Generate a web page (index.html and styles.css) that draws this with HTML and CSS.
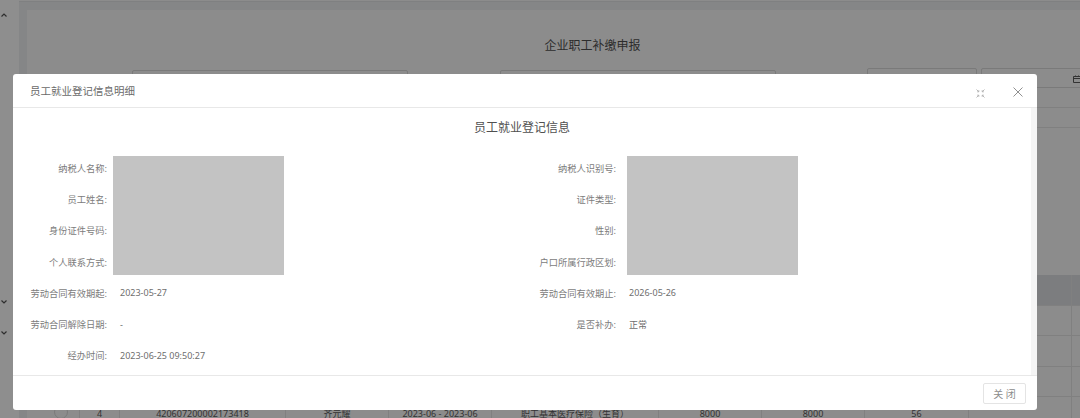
FILE: index.html
```html
<!DOCTYPE html>
<html lang="zh-CN">
<head>
<meta charset="utf-8">
<title>员工就业登记信息明细</title>
<link rel="stylesheet" href="styles.css">
</head>
<body>
<div class="page">
  <div class="side">
    <svg class="chev chev-up" width="6" height="4" viewBox="0 0 6 4"><path d="M0.500 3.500L3 1L5.500 3.500" fill="none" stroke="#2e2e2e" stroke-width="1.200"/></svg>
    <svg class="chev chev-d1" width="6" height="4" viewBox="0 0 6 4"><path d="M0.500 0.500L3 3L5.500 0.500" fill="none" stroke="#2e2e2e" stroke-width="1.200"/></svg>
    <svg class="chev chev-d2" width="6" height="4" viewBox="0 0 6 4"><path d="M0.500 0.500L3 3L5.500 0.500" fill="none" stroke="#2e2e2e" stroke-width="1.200"/></svg>
  </div>
  <div class="content">
    <div class="topbar"></div>
    <div class="card">
      <h1 class="page-title">企业职工补缴申报</h1>
      <div class="filters">
        <div class="fbox fbox-a"></div>
        <div class="fbox fbox-b"></div>
        <div class="fbox fbox-c"></div>
        <div class="fbox fbox-d">
          <svg class="cal" width="8" height="8" viewBox="0 0 8 8"><path d="M0.500 1.500H7.500V7.500H0.500ZM0.500 3.500H7.500M2.500 0.500V1.500M5.500 0.500V1.500" fill="none" stroke="#333" stroke-width="1"/></svg>
        </div>
      </div>
      <div class="fline"></div>
      <div class="fline"></div>
      <div class="grid">
        <div class="row row-head">
          <span></span><span></span><span></span><span></span><span></span><span></span><span></span><span></span><span></span><span></span><span class="amt">补缴金额</span><span></span>
        </div>
        <div class="row"><span></span><span></span><span></span><span></span><span></span><span></span><span></span><span></span><span></span><span></span><span></span><span></span></div>
        <div class="row"><span></span><span></span><span></span><span></span><span></span><span></span><span></span><span></span><span></span><span></span><span></span><span></span></div>
        <div class="row"><span></span><span></span><span></span><span></span><span></span><span></span><span></span><span></span><span></span><span></span><span></span><span></span></div>
        <div class="row">
          <span></span><span><i class="radio"></i></span><span>4</span><span>420607200002173418</span><span>齐元耀</span><span>2023-06 - 2023-06</span><span>职工基本医疗保险（生育）</span><span>8000</span><span>8000</span><span>56</span><span></span><span></span>
        </div>
      </div>
    </div>
  </div>
</div>
<div class="modal">
  <header class="modal-head">
    <span class="modal-title">员工就业登记信息明细</span>
    <svg class="ico-expand" width="9" height="9" viewBox="0 0 9 9"><path d="M0.500 0.500L2.500 2.500M2.800 1.200V2.800H1.200M8.500 0.500L6.500 2.500M6.200 1.200V2.800H7.800M0.500 8.500L2.500 6.500M2.800 7.800V6.200H1.200M8.500 8.500L6.500 6.500M6.200 7.800V6.200H7.800" fill="none" stroke="#a6a6a6" stroke-width="0.800"/></svg>
    <svg class="ico-close" width="10" height="10" viewBox="0 0 10 10"><path d="M0.500 0.500L9.500 9.500M9.500 0.500L0.500 9.500" fill="none" stroke="#909090" stroke-width="1"/></svg>
  </header>
  <div class="modal-body">
    <div class="scroll-area">
      <h2 class="sec-title">员工就业登记信息</h2>
      <div class="form">
        <div class="cell"><label>纳税人名称:</label><span></span></div>
        <div class="cell"><label>纳税人识别号:</label><span></span></div>
        <div class="cell"><label>员工姓名:</label><span></span></div>
        <div class="cell"><label>证件类型:</label><span></span></div>
        <div class="cell"><label>身份证件号码:</label><span></span></div>
        <div class="cell"><label>性别:</label><span></span></div>
        <div class="cell"><label>个人联系方式:</label><span></span></div>
        <div class="cell"><label>户口所属行政区划:</label><span></span></div>
        <div class="cell"><label>劳动合同有效期起:</label><span>2023-05-27</span></div>
        <div class="cell"><label>劳动合同有效期止:</label><span>2026-05-26</span></div>
        <div class="cell"><label>劳动合同解除日期:</label><span>-</span></div>
        <div class="cell"><label>是否补办:</label><span>正常</span></div>
        <div class="cell"><label>经办时间:</label><span>2023-06-25 09:50:27</span></div>
      </div>
      <div class="redact redact-l"></div>
      <div class="redact redact-r"></div>
    </div>
    <div class="scrollbar"></div>
  </div>
  <footer class="modal-foot"><button class="btn" type="button">关 闭</button></footer>
</div>
</body>
</html>
```
FILE: styles.css
```css
* { box-sizing: border-box; }
html, body { margin: 0; height: 100%; overflow: hidden; }
body {
  font-family: "Noto Sans", "Noto Sans CJK SC", sans-serif;
  background: #8c8c8c;
  width: 1080px;
  height: 418px;
  position: relative;
  color: #555;
}
.page { display: flex; height: 418px; }
.side { width: 19px; background: #8e8e8e; position: relative; flex: none; }
.chev { position: absolute; left: 1px; }
.chev-up { top: 13px; }
.chev-d1 { top: 300px; }
.chev-d2 { top: 331px; }
.content { flex: 1; min-width: 0; background: #858687; display: flex; flex-direction: column; }
.topbar { height: 2px; background: #8c8c8c; border-bottom: 1px solid #7f8081; flex: none; }
.card { margin: 8px 0 0 8px; flex: 1; min-height: 0; background: #8c8c8c; display: flex; flex-direction: column; overflow: hidden; }
.page-title { margin: 27px 0 0; padding-left: 78px; font-size: 12px; line-height: 18px; font-weight: 400; color: #2c2c2c; text-align: center; flex: none; }
.filters { display: flex; align-items: flex-start; height: 33px; border-bottom: 1px solid #808080; flex: none; }
.fbox { border: 1px solid #7a7a7a; border-radius: 2px; flex: none; }
.fbox-a { margin: 15px 0 0 105px; width: 276px; height: 30px; }
.fbox-b { margin: 15px 0 0 92px; width: 276px; height: 30px; }
.fbox-c { margin: 13px 0 0 91px; width: 110px; height: 20px; }
.fbox-d { margin: 13px 0 0 4px; width: 120px; height: 20px; padding: 6px 0 0 91px; }
.cal { display: block; }
.fline { height: 20px; border-bottom: 1px solid #808080; flex: none; }
.grid { margin-top: 147px; flex: none; font-size: 9px; line-height: 12px; color: #333; }
.row {
  display: grid;
  grid-template-columns: 14px 39px 40px 166px 103px 103px 167px 103px 103px 104px 103px 8px;
  height: 30.500px;
  border-bottom: 1px solid #808080;
}
.row span { border-right: 1px solid #808080; text-align: center; white-space: nowrap; padding-top: 11px; position: relative; }
.row span:first-child, .row span:last-child { border-right: 0; }
.row-head { background: #7c7d7f; }
.row span.amt { padding-right: 36px; padding-top: 9px; }
.radio { position: absolute; left: 13px; top: 8px; width: 14px; height: 14px; border: 1px solid #7a7a7a; border-radius: 50%; }

.modal {
  position: absolute; left: 13px; top: 74px; width: 1024px; height: 336px;
  background: #fff; border-radius: 3px; display: flex; flex-direction: column;
}
.modal-head { height: 34px; border-bottom: 1px solid #e8e8e8; display: flex; align-items: center; padding: 0 14px 0 17px; flex: none; }
.modal-title { font-size: 10.500px; color: #6a6a6a; flex: 1; }
.ico-expand { margin-right: 28px; margin-top: 5px; }
.ico-close { margin-top: 2px; }
.modal-body { flex: 1; display: flex; min-height: 0; }
.scroll-area { flex: 1; position: relative; min-width: 0; }
.scrollbar { width: 6px; background: #f5f5f5; flex: none; }
.sec-title { margin: 12px 0 0; font-size: 12px; line-height: 16px; font-weight: 400; color: #505050; text-align: center; }
.form { display: grid; grid-template-columns: 509px 1fr; grid-auto-rows: 31.300px; margin-top: 16px; font-size: 9.250px; color: #7c7c7c; }
.cell { display: flex; align-items: center; }
.cell label { width: 94px; text-align: right; flex: none; white-space: nowrap; }
.cell span { margin-left: 13px; white-space: nowrap; color: #6e6e6e; font-size: 9px; }
.redact { position: absolute; top: 48px; height: 119px; background: #c3c3c3; }
.redact-l { left: 100px; width: 171px; }
.redact-r { left: 614px; width: 171px; }
.modal-foot { height: 35px; border-top: 1px solid #e8e8e8; display: flex; justify-content: flex-end; align-items: center; padding-right: 11px; flex: none; }
.btn { width: 43px; height: 21px; border: 1px solid #e4e4e4; border-radius: 2px; background: #fff; font: inherit; font-size: 10px; color: #8c8c8c; padding: 0; }
```
